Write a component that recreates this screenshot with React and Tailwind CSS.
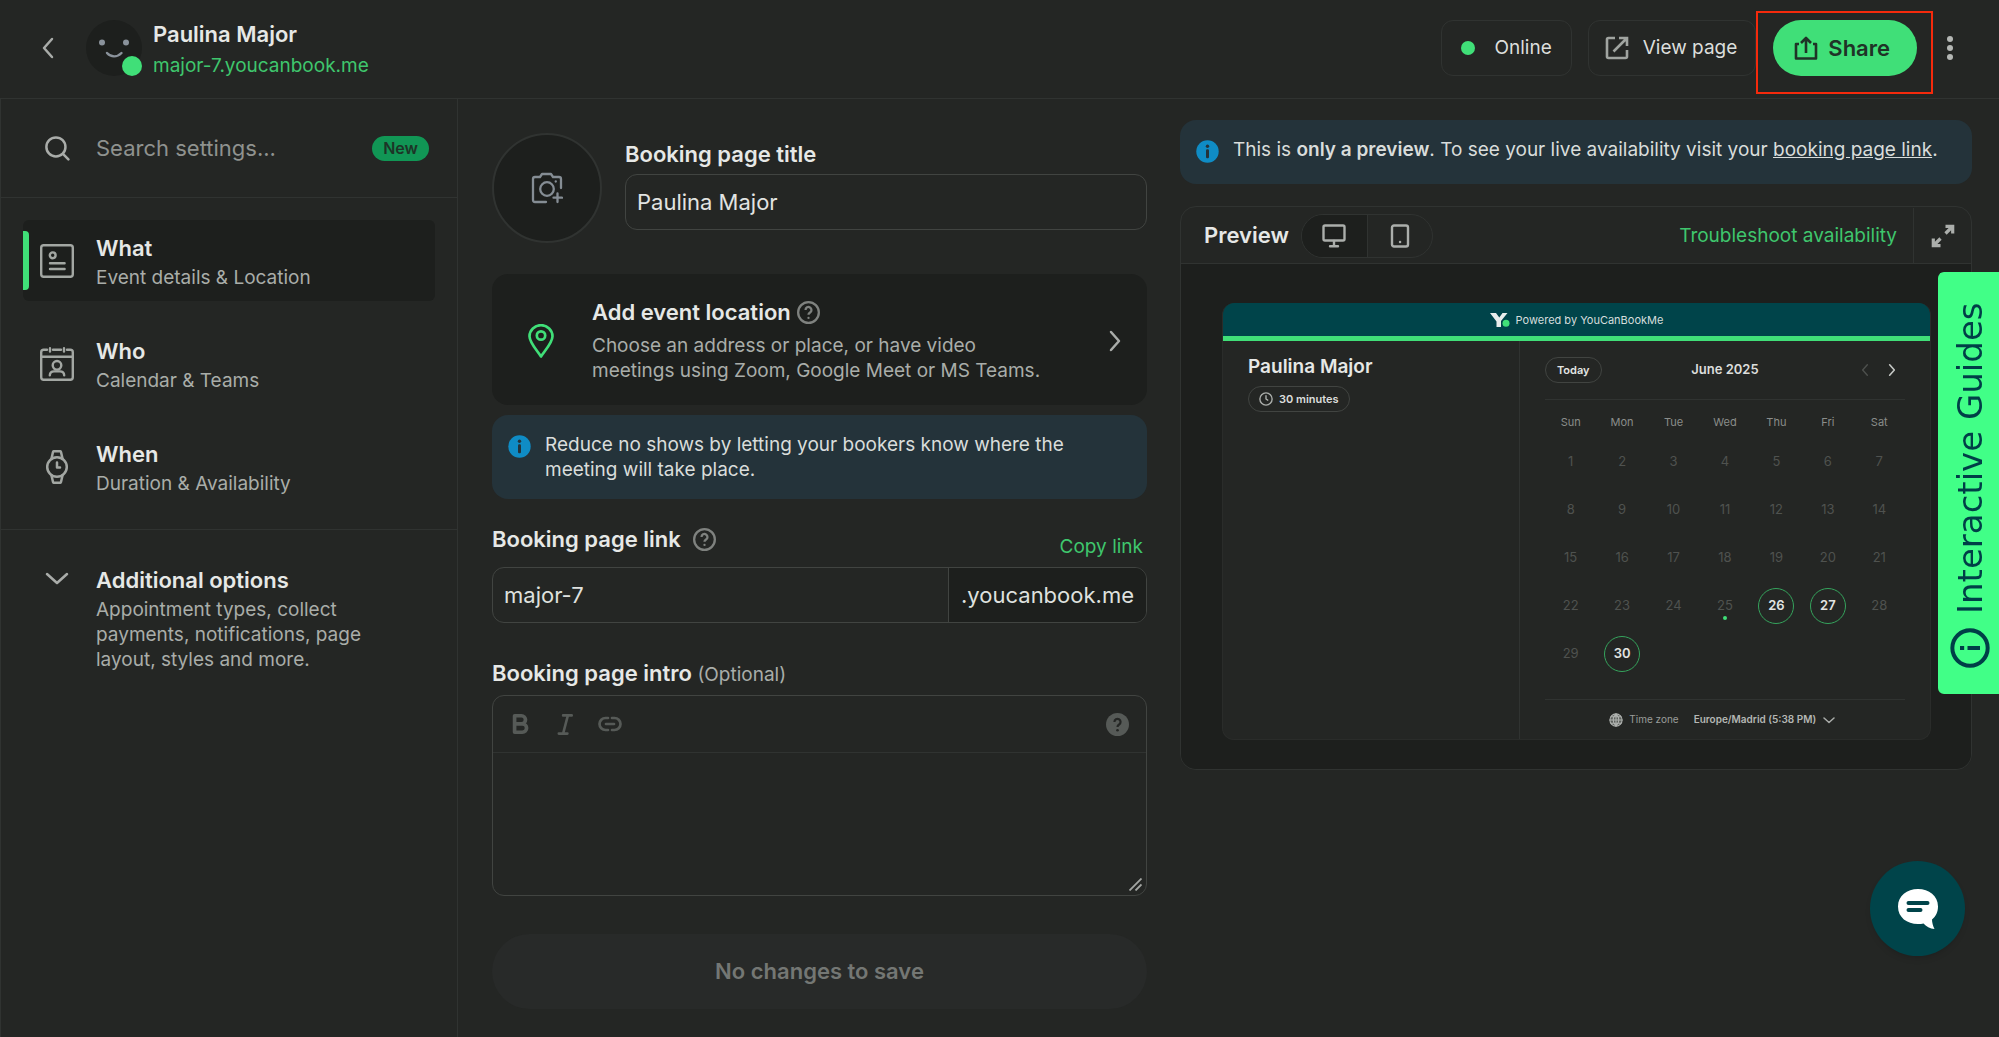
import clsx from 'clsx';

const NAV_ITEMS = [
  { id: 'what', title: 'What', subtitle: 'Event details & Location', icon: EventIcon, active: true },
  { id: 'who', title: 'Who', subtitle: 'Calendar & Teams', icon: CalendarUserIcon },
  { id: 'when', title: 'When', subtitle: 'Duration & Availability', icon: WatchIcon },
];

const WEEK_DAYS = ['Sun', 'Mon', 'Tue', 'Wed', 'Thu', 'Fri', 'Sat'];
const WEEKS = [
  [1, 2, 3, 4, 5, 6, 7],
  [8, 9, 10, 11, 12, 13, 14],
  [15, 16, 17, 18, 19, 20, 21],
  [22, 23, 24, 25, 26, 27, 28],
  [29, 30, null, null, null, null, null],
];
const AVAILABLE = [26, 27, 30];
const TODAY = 25;

function Stroke({ size = 24, width = 2, viewBox = '0 0 24 24', className, children }) {
  return (
    <svg
      width={size}
      height={size}
      viewBox={viewBox}
      fill="none"
      stroke="currentColor"
      strokeWidth={width}
      strokeLinecap="round"
      strokeLinejoin="round"
      className={clsx('shrink-0', className)}
      aria-hidden="true"
    >
      {children}
    </svg>
  );
}

function EventIcon() {
  return (
    <Stroke size={34} viewBox="0 0 34 34" width={2.4}>
      <rect x="1.2" y="1.2" width="31.6" height="31.6" rx="2.5" />
      <circle cx="12.7" cy="11.3" r="2.9" />
      <path d="M10 19.3h14.6M10 25h14.6" />
    </Stroke>
  );
}

function CalendarUserIcon() {
  return (
    <Stroke size={34} viewBox="0 0 34 34" width={2.4}>
      <path d="M7 2.7H3.7q-2.5 0-2.5 2.5v25.1q0 2.5 2.5 2.5h26.6q2.5 0 2.5-2.5V5.2q0-2.5-2.5-2.5H27M13 2.7h8M1.2 9.8h31.6M10 1.2v3.4M24 1.2v3.4" />
      <circle cx="17" cy="18.3" r="4.3" />
      <path d="M9.8 28.3c.2-2.9 2.2-3.9 4.2-3.9h6c2 0 4 1 4.2 3.9" />
    </Stroke>
  );
}

function WatchIcon() {
  return (
    <Stroke size={34} viewBox="0 0 34 34" width={2.5}>
      <circle cx="17" cy="17" r="9.8" />
      <path d="M11.5 8.5L13 2q.2-.8 1.1-.8h5.8q.9 0 1.1.8l1.5 6.5M11.5 25.5L13 32q.2.8 1.1.8h5.8q.9 0 1.1-.8l1.5-6.5M17 12.5v5h3" />
    </Stroke>
  );
}

function HelpIcon() {
  return (
    <Stroke size={23} width={2.4} className="text-[#7f827f]">
      <circle cx="12" cy="12" r="10.8" />
      <path d="M8.9 9.3a3.1 3.1 0 1 1 4.7 2.7c-1 .7-1.6 1.2-1.6 2.3" strokeLinecap="butt" />
      <path d="M12 17.7h.01" />
    </Stroke>
  );
}

function InfoBadge() {
  return (
    <svg width="23" height="23" viewBox="0 0 23 23" className="mt-[3px] shrink-0" aria-hidden="true">
      <circle cx="11.5" cy="11.5" r="11.2" fill="#0f8cc5" />
      <circle cx="11.5" cy="6.2" r="1.7" fill="#24333a" />
      <rect x="10" y="9.3" width="3" height="9" rx="1.2" fill="#24333a" />
    </svg>
  );
}

function Chevron({ d, size, width = 2, className }) {
  return (
    <Stroke size={size} width={width} className={className}>
      <path d={d} />
    </Stroke>
  );
}

const RIGHT = 'M8 3l8 9-8 9';
const LEFT = 'M16 3l-8 9 8 9';
const DOWN = 'M2 8l10 9 10-9';

function Header() {
  return (
    <header className="flex h-[99px] items-center border-b border-[#303331] pr-[46px] pb-0.5 pl-9">
      <button type="button" aria-label="Back" className="text-[#a9aca9]">
        <Chevron d={LEFT} size={24} width={2.5} />
      </button>
      <div className="relative ml-[26px] size-14 shrink-0 rounded-full bg-[#1d1f1d]">
        <svg width="56" height="56" viewBox="0 0 56 56" fill="none" aria-hidden="true">
          <circle cx="16" cy="22.5" r="3" fill="#8a929b" />
          <circle cx="40" cy="22.5" r="3" fill="#8a929b" />
          <path d="M21 33c4 4.5 10 4.5 14.500 0" stroke="#8a929b" strokeWidth="2.4" strokeLinecap="round" />
        </svg>
        <span className="absolute right-0 bottom-0 size-5 rounded-full bg-[#40df78]" />
      </div>
      <div className="ml-[11px] pt-[3px]">
        <h1 className="text-[22px] leading-8 font-semibold text-[#e6e8e6]">Paulina Major</h1>
        <a href="#page" className="block text-[19px] leading-8 text-[#3fc66d]">major-7.youcanbook.me</a>
      </div>

      <div className="ml-auto flex items-center">
        <button type="button" className="flex h-14 items-center gap-5 rounded-xl border border-[#303331] px-[19px] text-[19px] text-[#dcdedc]">
          <span className="size-3.5 rounded-full bg-[#40df78]" />
          Online
        </button>
        <a href="#view" className="ml-4 flex h-14 items-center gap-3.5 rounded-xl border border-[#303331] pr-[18px] pl-4 text-[19px] text-[#dcdedc]">
          <svg width="24" height="24" viewBox="0 0 24 24" fill="none" stroke="#a0a4a0" strokeWidth="2.6" aria-hidden="true">
            <path d="M10 2H3.5Q2 2 2 3.5v17Q2 22 3.5 22h17q1.5 0 1.5-1.5V14M14 2h8v8M22 2L8.5 15.500" />
          </svg>
          View page
        </a>
        <div className="relative ml-[17px]">
          <button type="button" className="flex h-14 items-center gap-2.5 rounded-full bg-[#40df78] pr-[27px] pl-[21px] text-[22px] font-semibold text-[#1f3327]">
            <svg width="24" height="24" viewBox="0 0 24 24" fill="none" stroke="currentColor" strokeWidth="2.6" strokeLinejoin="round" aria-hidden="true">
              <path d="M5 8H2v14.500h20V8h-3M12 17V2.500M7 7l5-5 5 5" />
            </svg>
            Share
          </button>
          <span className="pointer-events-none absolute -top-[9px] -right-4 -bottom-[18px] -left-[17px] border-2 border-[#f52a0c]" />
        </div>
        <button type="button" aria-label="More" className="ml-[30px] flex flex-col gap-[3px]">
          <span className="size-[6px] rounded-full bg-[#b4b7b4]" />
          <span className="size-[6px] rounded-full bg-[#b4b7b4]" />
          <span className="size-[6px] rounded-full bg-[#b4b7b4]" />
        </button>
      </div>
    </header>
  );
}

function Sidebar() {
  return (
    <aside className="w-[458px] shrink-0 border-x border-[#303331]">
      <label className="flex h-[99px] items-center border-b border-[#303331] pr-7 pl-[43px]">
        <Stroke size={26} width={2.3} className="text-[#a9aca9]">
          <circle cx="11" cy="11" r="8.8" />
          <path d="M17.5 17.500l5 5" />
        </Stroke>
        <input
          type="search"
          placeholder="Search settings..."
          className="ml-[26px] min-w-0 flex-1 bg-transparent text-[22px] outline-none placeholder:text-[#8f928f]"
        />
        <span className="rounded-full bg-[#119655] px-[11px] text-base leading-[25px] font-semibold text-[#1d3527]">New</span>
      </label>

      <nav className="flex flex-col gap-[22px] border-b border-[#303331] p-[22px]">
        {NAV_ITEMS.map(({ id, title, subtitle, icon: Icon, active }) => (
          <a
            key={id}
            href={`#${id}`}
            className={clsx('flex h-[81px] items-center rounded-md text-[#a3a7a3]', active && 'bg-[#1d1f1d]')}
          >
            <span className={clsx('h-[59px] w-1.5 rounded-r-sm', active && 'bg-[#40df78]')} />
            <span className="ml-[11px]"><Icon /></span>
            <span className="ml-[22px] pt-[3px]">
              <span className="block text-[22px] leading-7 font-semibold text-[#e6e8e6]">{title}</span>
              <span className="mt-[3px] block text-[19px] leading-[25px] text-[#a9ada9]">{subtitle}</span>
            </span>
          </a>
        ))}
      </nav>

      <button type="button" className="flex w-full items-start py-9 pr-[70px] pl-11 text-left">
        <Chevron d={DOWN} size={24} width={2.5} className="text-[#a9aca9]" />
        <span className="ml-[27px]">
          <span className="block text-[22px] leading-7 font-semibold text-[#e6e8e6]">Additional options</span>
          <span className="mt-[3px] block text-[19px] leading-[25px] text-[#a9ada9]">
            Appointment types, collect payments, notifications, page layout, styles and more.
          </span>
        </span>
      </button>
    </aside>
  );
}

function BookingForm() {
  return (
    <form className="pt-[34px] pb-7">
      <div className="flex items-start gap-[23px]">
        <button type="button" aria-label="Upload picture" className="flex size-[110px] shrink-0 items-center justify-center rounded-full border-2 border-[#303331] bg-[#1d1f1d] text-[#858d94]">
          <Stroke size={32} width={2.3} viewBox="0 0 32 32">
            <path d="M15 30H4q-2 0-2-2V7q0-2 2-2h5l2-3h9l2 3h6q2 0 2 2v9" />
            <circle cx="16" cy="17" r="6.8" />
            <path d="M26.5 21.500v8.500M22.500 25.700h8.500M24.700 9.500h.1" />
          </Stroke>
        </button>
        <div className="min-w-0 flex-1 pt-[7px]">
          <label htmlFor="title" className="block text-[22px] leading-7 font-semibold text-[#e6e8e6]">Booking page title</label>
          <input
            id="title"
            defaultValue="Paulina Major"
            className="mt-1.5 h-14 w-full rounded-xl border border-[#414441] bg-transparent px-[11px] text-[22px] text-[#e2e4e2] outline-none"
          />
        </div>
      </div>

      <div className="mt-[31px] flex items-center rounded-2xl bg-[#1d1f1d] pt-6 pr-5 pb-[22px] pl-8">
        <Stroke size={34} width={2.7} viewBox="0 0 34 34" className="text-[#40df78]">
          <path d="M17 32.5C13 26.500 5.500 18.500 5.500 12.200a11.500 11 0 0 1 23 0C28.500 18.500 21 26.500 17 32.500z" />
          <circle cx="17" cy="11.5" r="4.2" />
        </Stroke>
        <div className="ml-[34px] flex-1">
          <h2 className="flex items-center gap-1.5 text-[22px] leading-7 font-semibold text-[#e6e8e6]">
            Add event location <HelpIcon />
          </h2>
          <p className="mt-[7px] max-w-[470px] text-[19px] leading-[25px] text-[#a9ada9]">
            Choose an address or place, or have video meetings using Zoom, Google Meet or MS Teams.
          </p>
        </div>
        <button type="button" aria-label="Choose location" className="text-[#a9aca9]">
          <Chevron d={RIGHT} size={24} width={2.5} />
        </button>
      </div>

      <div className="mt-2.5 flex items-start gap-3.5 rounded-2xl bg-[#24333a] px-4 py-[17px] text-[19px] leading-[25px] text-[#d9dddb]">
        <InfoBadge />
        <p className="max-w-[545px]">Reduce no shows by letting your bookers know where the meeting will take place.</p>
      </div>

      <div className="mt-[26px] flex h-[34px] justify-between">
        <div className="flex h-7 items-center gap-3">
          <label htmlFor="link" className="text-[22px] leading-7 font-semibold text-[#e6e8e6]">Booking page link</label>
          <HelpIcon />
        </div>
        <button type="button" className="mr-1 self-end text-[19px] leading-[25px] text-[#3fc66d]">Copy link</button>
      </div>
      <div className="mt-2 flex h-14 overflow-hidden rounded-xl border border-[#414441] text-[22px] text-[#dfe1df]">
        <input id="link" defaultValue="major-7" className="min-w-0 flex-1 bg-transparent px-[11px] outline-none" />
        <span className="flex items-center border-l border-[#414441] bg-[#1d1f1d] px-3">.youcanbook.me</span>
      </div>

      <label htmlFor="intro" className="mt-9 block text-[22px] leading-7 font-semibold text-[#e6e8e6]">
        Booking page intro <span className="text-[19px] font-normal text-[#a9ada9]">(Optional)</span>
      </label>
      <div className="relative mt-1.5 rounded-xl border border-[#414441]">
        <div className="flex h-[57px] items-center border-b border-[#303331] px-[17px] text-[#565a57]">
          <button type="button" aria-label="Bold">
            <Stroke size={22} width={4}>
              <path d="M5 3h7.500a4.400 4.400 0 0 1 0 8.800H5zM5 11.800h8.500a4.600 4.600 0 0 1 0 9.200H5z" />
            </Stroke>
          </button>
          <button type="button" aria-label="Italic" className="ml-[22px]">
            <Stroke size={23} width={2.7}>
              <path d="M9.500 2.500h9M5 21.500h9M14.500 2.500l-5 19" />
            </Stroke>
          </button>
          <button type="button" aria-label="Link" className="ml-[21px]">
            <Stroke size={24} width={2.7}>
              <path d="M10 6H7.500a5.500 5.500 0 0 0 0 12H10M14 6h2.500a5.500 5.500 0 0 1 0 12H14M8 12h8" />
            </Stroke>
          </button>
          <button type="button" aria-label="Formatting help" className="ml-auto">
            <svg width="23" height="23" viewBox="0 0 24 24" fill="none" aria-hidden="true">
              <circle cx="12" cy="12" r="12" fill="#565a57" />
              <path d="M8.800 9.300a3.200 3.200 0 1 1 4.900 2.700c-1.100.7-1.700 1.200-1.700 2.700" stroke="#242624" strokeWidth="2.3" />
              <circle cx="12" cy="18" r="1.4" fill="#242624" />
            </svg>
          </button>
        </div>
        <textarea id="intro" className="block h-[142px] w-full resize-none bg-transparent px-3 py-2 text-[19px] text-[#e2e4e2] outline-none" />
        <svg width="13" height="13" viewBox="0 0 13 13" stroke="#a3a6a3" strokeWidth="1.8" className="pointer-events-none absolute right-1 bottom-1" aria-hidden="true">
          <path d="M.5 12.500l12-12M6.500 12.500l6-6" />
        </svg>
      </div>

      <button type="submit" disabled className="mt-[38px] h-[75px] w-full rounded-full bg-[#282a29] text-[22px] font-semibold text-[#747774]">
        No changes to save
      </button>
    </form>
  );
}

function Calendar() {
  return (
    <div className="flex-1 px-[25px]">
      <div className="grid grid-cols-3 items-center border-b border-[#303331] py-4">
        <button type="button" className="h-[26px] justify-self-start rounded-full border border-[#414441] px-[11px] text-[11px] font-semibold text-[#e2e4e2]">Today</button>
        <h3 className="text-center text-[13px] font-semibold text-[#dcdedc]">June 2025</h3>
        <div className="flex justify-end gap-[13px] pr-1.5">
          <button type="button" aria-label="Previous month" className="text-[#4d504d]"><Chevron d={LEFT} size={14} width={2.4} /></button>
          <button type="button" aria-label="Next month" className="text-[#c4c7c4]"><Chevron d={RIGHT} size={14} width={2.8} /></button>
        </div>
      </div>
      <table className="w-full table-fixed text-center">
        <thead>
          <tr className="h-[38px]">
            {WEEK_DAYS.map((day) => (
              <th key={day} className="pt-1.5 text-[11px] leading-4 font-normal text-[#8a8d8a]">{day}</th>
            ))}
          </tr>
        </thead>
        <tbody>
          {WEEKS.map((week, i) => (
            <tr key={i} className="h-12">
              {week.map((day, j) => (
                <td key={j} className="p-0 text-[13px] text-[#4f524f]">
                  {AVAILABLE.includes(day) ? (
                    <button type="button" className="size-9 rounded-full border border-[#35a35c] font-semibold text-[#e2e4e2]">{day}</button>
                  ) : (
                    <span className="relative inline-block">
                      {day}
                      {day === TODAY && <span className="absolute -bottom-1 left-1/2 size-1 -translate-x-1/2 rounded-full bg-[#40df78]" />}
                    </span>
                  )}
                </td>
              ))}
            </tr>
          ))}
        </tbody>
      </table>
      <div className="mt-[21px] flex h-10 items-center justify-center border-t border-[#303331] pr-1.5 text-[10px] text-[#9a9d9a]">
        <Stroke size={14} width={1.8} className="text-[#b0b3b0]">
          <circle cx="12" cy="12" r="10.5" fill="#5c605c" />
          <path d="M1.500 12h21M12 1.500v21M3.500 6.500h17M3.500 17.500h17M12 1.500c-6.500 6-6.500 15 0 21M12 1.500c6.500 6 6.500 15 0 21" />
        </Stroke>
        <label htmlFor="tz" className="mr-[15px] ml-1.5">Time zone</label>
        <select id="tz" className="appearance-none bg-transparent font-semibold text-[#b4b7b4]">
          <option>Europe/Madrid (5:38 PM)</option>
        </select>
        <Chevron d={DOWN} size={12} width={3} className="ml-1.5 text-[#a9aca9]" />
      </div>
    </div>
  );
}

function Preview() {
  return (
    <section className="pt-[21px]">
      <div className="flex min-h-16 items-start gap-3.5 rounded-2xl bg-[#24333a] px-4 py-[17px] text-[19px] leading-[25px] text-[#d9dddb]">
        <InfoBadge />
        <p>
          This is <b className="font-semibold">only a preview</b>. To see your live availability visit your{' '}
          <a href="#live" className="underline">booking page link</a>.
        </p>
      </div>

      <div className="mt-[22px] overflow-hidden rounded-2xl border border-[#303331]">
        <div className="flex h-[57px] items-center border-b border-[#303331] pt-px pl-[23px]">
          <h2 className="text-[22px] font-semibold text-[#e6e8e6]">Preview</h2>
          <div className="ml-3 flex h-11 overflow-hidden rounded-full border border-[#303331] text-[#abaeab]">
            <button type="button" aria-label="Desktop" className="flex w-[66px] items-center justify-center border-r border-[#303331] bg-[#1d1f1d]">
              <Stroke size={24} width={2.4}>
                <rect x="1.5" y="1.5" width="21" height="15" rx="1.5" />
                <path d="M12 17v5M8 22.300h8" />
              </Stroke>
            </button>
            <button type="button" aria-label="Mobile" className="flex w-16 items-center justify-center">
              <Stroke size={24} width={2.4}>
                <rect x="4" y="1.5" width="16" height="21" rx="2" />
                <path d="M12 18h.1" />
              </Stroke>
            </button>
          </div>
          <a href="#troubleshoot" className="ml-auto pt-0.5 text-[19px] text-[#3fc66d]">Troubleshoot availability</a>
          <button type="button" aria-label="Expand" className="ml-4 flex w-[58px] items-center justify-center self-stretch border-l border-[#303331] text-[#abaeab]">
            <svg width="24" height="24" viewBox="0 0 24 24" fill="none" stroke="currentColor" strokeWidth="3.2" aria-hidden="true">
              <path d="M14.500 2.300h7.200v7.200M21.500 2.500l-7 7M9.500 21.700H2.300v-7.200M2.500 21.500l7-7" />
            </svg>
          </button>
        </div>

        <div className="bg-[#1d1f1d] pt-[39px] pr-10 pb-[29px] pl-[41px]">
          <div className="overflow-hidden rounded-xl border-x border-b border-[#2a2c2a] bg-[#242624]">
            <div className="flex h-[38px] items-center justify-center gap-1.5 border-b-[5px] border-[#40df78] bg-[#00444a] pt-px text-[11px] text-[#d5dddc]">
              <svg width="20" height="14" viewBox="0 0 20 14" aria-hidden="true">
                <path d="M0 0h6l3.300 4.500L12.500 0h5L11 8v6H6.500V8.500z" fill="#e8eceb" />
                <circle cx="16" cy="10.3" r="3.5" fill="#40df78" />
              </svg>
              Powered by YouCanBookMe
            </div>
            <div className="flex">
              <div className="w-[42%] border-r border-[#303331] px-[25px] pt-[14px]">
                <h3 className="text-[19px] leading-6 font-semibold text-[#e6e8e6]">Paulina Major</h3>
                <span className="mt-[7px] inline-flex h-[26px] items-center gap-1.5 rounded-full border border-[#414441] px-[10px] text-[11px] font-semibold text-[#dcdedc]">
                  <Stroke size={14} width={2.4} className="text-[#abaeab]">
                    <circle cx="12" cy="12" r="10.5" />
                    <path d="M12 6.500V12l3 2" />
                  </Stroke>
                  30 minutes
                </span>
              </div>
              <Calendar />
            </div>
          </div>
        </div>
      </div>
    </section>
  );
}

export default function App() {
  return (
    <div className="relative min-h-screen bg-[#242624] font-[Inter,sans-serif]">
      <Header />
      <div className="flex min-h-[calc(100vh-99px)]">
        <Sidebar />
        <main className="grid flex-1 grid-cols-[655fr_792fr] gap-[33px] pr-[27px] pl-[34px]">
          <BookingForm />
          <Preview />
        </main>
      </div>

      <button
        type="button"
        className="fixed top-[272px] right-0 flex h-[422px] w-[61px] rotate-180 items-center justify-start gap-3.5 rounded-r-md bg-[#41ff87] pt-[26px] pr-1 font-['DejaVu_Sans',sans-serif] text-[34px] text-[#003f47] [writing-mode:vertical-rl]"
      >
        <Stroke size={40} width={2.4} className="rotate-90">
          <circle cx="12" cy="12" r="10.6" />
          <path d="M12 10.500v7.500M12 6v2.500" strokeLinecap="butt" />
        </Stroke>
        Interactive Guides
      </button>

      <button type="button" aria-label="Chat" className="fixed right-[34px] bottom-[81px] flex size-[95px] items-center justify-center rounded-full bg-[#00444a] shadow-md">
        <svg width="40" height="40" viewBox="0 0 40 40" aria-hidden="true">
          <path d="M20 0C9 0 0 6.500 0 17.500S9 35 20 35c2 0 4-.2 5.500-.6C28 37.500 32 39.500 36.500 40 35 37 34 33.500 34 30.500c3.800-3 6-7.500 6-13C40 6.500 31 0 20 0z" fill="#fff" />
          <path d="M10.500 14h19M10.500 21h12" stroke="#00444a" strokeWidth="4" strokeLinecap="round" />
        </svg>
      </button>
    </div>
  );
}
